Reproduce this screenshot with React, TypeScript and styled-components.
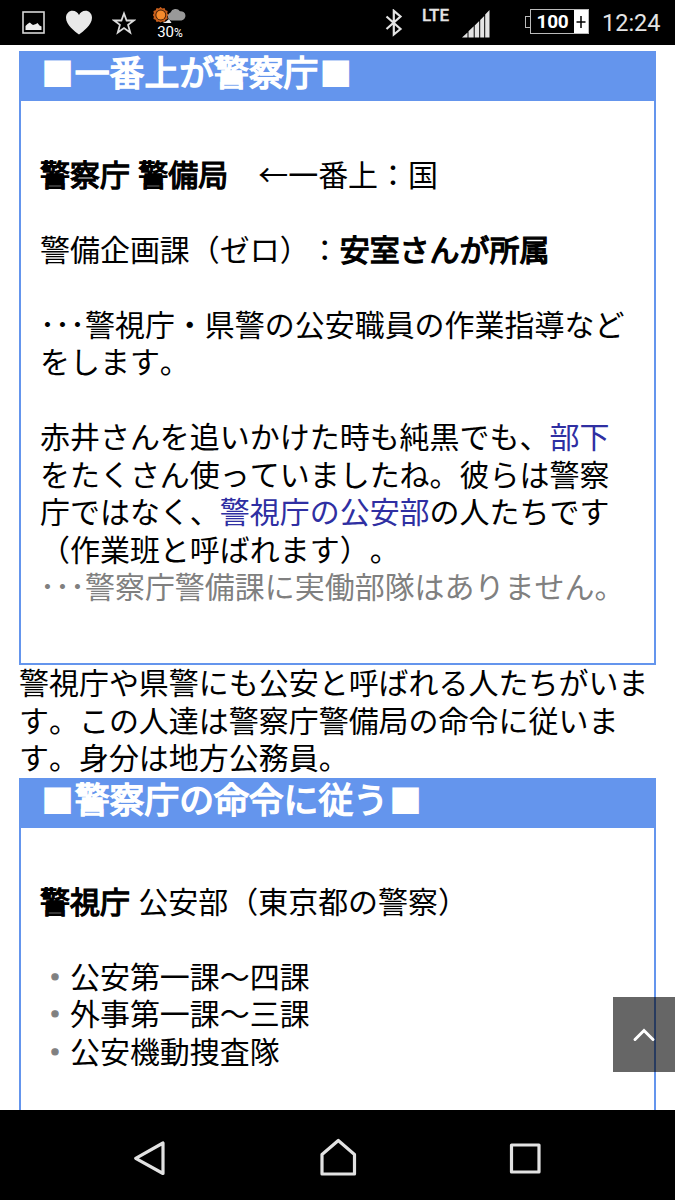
import React from "react";
import styled, { createGlobalStyle } from "styled-components";

const GlobalStyle = createGlobalStyle`
  * { box-sizing: border-box; }
  body { margin: 0; background: #000; }
`;

const Screen = styled.div`
  width: 675px;
  height: 1200px;
  display: flex;
  flex-direction: column;
  overflow: hidden;
  background: #000;
  font-family: Roboto, "Noto Sans CJK JP", sans-serif;
`;

const StatusBar = styled.header`
  height: 45px;
  flex: none;
  display: flex;
  justify-content: space-between;
  color: #e4e4e4;
`;

const StatusGroup = styled.div<{ $padding: string }>`
  display: flex;
  align-items: flex-start;
  padding: ${(p) => p.$padding};
`;

const StatusItem = styled.div<{ $left?: number; $top?: number }>`
  margin-left: ${(p) => p.$left ?? 0}px;
  margin-top: ${(p) => p.$top ?? 0}px;
  line-height: 0;
`;

const Weather = styled.div`
  width: 34px;
  margin: 7px 0 0 17px;
  display: flex;
  flex-direction: column;
  align-items: center;
`;

const Percent = styled.div`
  font-size: 15px;
  line-height: 15px;
  color: #fff;
  white-space: nowrap;
  small { font-size: 12px; }
`;

const Network = styled.div`
  margin: 5px 0 0 19px;
  width: 28px;
  font-size: 17px;
  line-height: 20px;
  font-weight: 500;
  -webkit-text-stroke: 0.3px currentColor;
`;

const Battery = styled.div`
  display: flex;
  align-items: center;
  margin: 9px 0 0 35px;
`;

const BatteryTip = styled.div`
  width: 5px;
  height: 12px;
  border: 1px solid #bbb;
  border-right: 0;
`;

const BatteryBody = styled.div`
  width: 59px;
  height: 25px;
  display: flex;
  border: 1px solid #bbb;
`;

const BatteryLevel = styled.div`
  width: 43px;
  text-align: center;
  color: #fff;
  font-size: 19px;
  line-height: 24px;
  font-weight: 700;
  letter-spacing: -0.3px;
`;

const Charging = styled.div`
  flex: 1;
  background: #fff;
  line-height: 0;
`;

const Clock = styled.div`
  margin: 9px 0 0 13px;
  width: 58px;
  font-size: 23.5px;
  line-height: 28px;
  white-space: nowrap;
`;

const Page = styled.main`
  position: relative;
  flex: 1;
  min-height: 0;
  overflow: hidden;
  padding: 6px 19px 0;
  background: #fff;
  color: #000;
  font-size: 29.97px;
  line-height: 37.5px;
  font-kerning: none;
  text-spacing-trim: space-all;
`;

const Card = styled.section`
  width: 637px;
  border: 2px solid #6495ed;
`;

const CardTitle = styled.h2`
  margin: -2px -2px 0;
  height: 50px;
  padding: 1px 0 0 21px;
  background: #6495ed;
  color: #fff;
  font-size: 34.8px;
  line-height: 44px;
  font-weight: 400;
  white-space: nowrap;
  -webkit-text-stroke: 1.6px currentColor;
`;

const Square = styled.span`
  display: inline-block;
  width: 34.8px;
  text-align: center;
  font-size: 33px;
  -webkit-text-stroke: 0;
`;

const CardBody = styled.div`
  padding: 55.9px 19px 56.6px;
`;

const Paragraph = styled.p`
  margin: 0 0 37.5px;
  &:last-child { margin-bottom: 0; }
`;

const Interlude = styled.p`
  margin: 0;
`;

const Line = styled.span<{ $muted?: boolean }>`
  display: block;
  height: 37.5px;
  white-space: pre;
  word-spacing: 1px;
  color: ${(p) => (p.$muted ? "#808080" : "inherit")};
`;

const Strong = styled.b`
  font-weight: 400;
  -webkit-text-stroke: 1.3px currentColor;
`;

const Link = styled.a`
  color: #2f2fa2;
`;

const Bullet = styled.span`
  color: #808080;
  -webkit-text-stroke: 1px currentColor;
`;

const TopButton = styled.button`
  position: absolute;
  right: 0;
  top: 952px;
  width: 62px;
  height: 75px;
  padding: 0;
  border: 0;
  background: rgba(0, 0, 0, 0.6);
  line-height: 0;
`;

const NavBar = styled.nav`
  height: 90px;
  flex: none;
  display: flex;
  justify-content: center;
  align-items: center;
  gap: 127.5px;
  padding-top: 6px;
`;

const NavIcon = styled.svg`
  width: 60px;
  height: 60px;
  fill: none;
  stroke: #e2e2e2;
  stroke-width: 3.2;
  stroke-linejoin: round;
`;

export default function App() {
  return (
    <Screen>
      <GlobalStyle />
      <StatusBar>
        <StatusGroup $padding="0 0 0 22px">
          <StatusItem $top={11}>
            <svg width="23" height="23" viewBox="0 0 23 23">
              <rect x="1" y="1" width="21" height="21" fill="none" stroke="#d6d6d6" strokeWidth="1.6" />
              <path d="M3.500 19v-4l2-2 2.300-1.500 1.700 1.500 1.500 1 3-1 1.500-1 2 2.500 2 1V19z" fill="#eee" />
            </svg>
          </StatusItem>
          <StatusItem $left={20} $top={10}>
            <svg width="28" height="26" viewBox="0 0 28 26">
              <path d="M14 24.6C10 21.5 1 15 1 7.8 1 3.500 4 .8 7.500.8c3 0 5.300 1.600 6.500 4.200C15.200 2.400 17.500.8 20.500.8 24 .8 27 3.500 27 7.800 27 15 18 21.500 14 24.600z" fill="#e8e8e8" />
            </svg>
          </StatusItem>
          <StatusItem $left={19} $top={11}>
            <svg width="24" height="24" viewBox="0 0 24 24">
              <path d="M12 2.500l2.600 7h7.200l-5.700 4.400 2.100 7.600-6.200-4.500-6.200 4.500 2.100-7.600-5.700-4.400h7.200z" fill="none" stroke="#dcdcdc" strokeWidth="1.800" />
            </svg>
          </StatusItem>
          <Weather>
            <svg width="34" height="18" viewBox="0 0 34 18">
              <path d="M9 1.500l1.800 1.600 2.400-.5 1 2.300 2.300 1-.5 2.400L17.500 10 16 11.700l.5 2.400-2.300 1-1 2.200-2.400-.5L9 18l-1.800-1.200-2.400.5-1-2.200-2.300-1 .5-2.400L.5 10 2 8.300l-.5-2.400 2.300-1 1-2.300 2.400.5z" fill="#c85f1c" transform="translate(-1 -1.500) scale(.95)" />
              <circle cx="7.800" cy="8" r="5.400" fill="#3c1c08" />
              <circle cx="7.800" cy="8" r="4.500" fill="#f58a2c" />
              <path d="M9.500 16h9l-2.500-4-3 2.500z" fill="#eee" />
              <path d="M18.300 13.500a4.200 4.200 0 0 1-.8-8A5.500 5.500 0 0 1 27 4.200a4.700 4.700 0 0 1 1.500 9.300z" fill="#999" />
            </svg>
            <Percent>30<small>%</small></Percent>
          </Weather>
        </StatusGroup>
        <StatusGroup $padding="0 15px 0 0">
          <StatusItem $top={9}>
            <svg width="18" height="28" viewBox="0 0 18 28">
              <path d="M1.500 7.500L15.500 20 8.800 25.500V1.800L15.500 7.500 1.500 20" fill="none" stroke="#e4e4e4" strokeWidth="2.200" />
            </svg>
          </StatusItem>
          <Network>LTE</Network>
          <StatusItem $left={12} $top={10}>
            <svg width="28" height="28" viewBox="0 0 28 28" fill="#e4e4e4">
              <path d="M0 27.500L5.500 22.500v5zM6.500 21.300l5.200-5v11.200H6.500zM12.700 15.500L17.200 11v16.500h-4.500zM18.200 10l4-3.900v21.400h-4zM23.200 4.500L27.500 0v27.500h-4.300z" />
            </svg>
          </StatusItem>
          <Battery>
            <BatteryTip />
            <BatteryBody>
              <BatteryLevel>100</BatteryLevel>
              <Charging>
                <svg width="14" height="23" viewBox="0 0 14 23">
                  <path d="M2.500 12h9M7 6v12" stroke="#000" strokeWidth="1.500" />
                </svg>
              </Charging>
            </BatteryBody>
          </Battery>
          <Clock>12:24</Clock>
        </StatusGroup>
      </StatusBar>

      <Page>
        <Card>
          <CardTitle><Square>■</Square>一番上が警察庁<Square>■</Square></CardTitle>
          <CardBody>
            <Paragraph>
              <Line><Strong>警察庁 警備局</Strong>　←一番上：国</Line>
            </Paragraph>
            <Paragraph>
              <Line>警備企画課（ゼロ）：<Strong>安室さんが所属</Strong></Line>
            </Paragraph>
            <Paragraph>
              <Line>･･･警視庁・県警の公安職員の作業指導など</Line>
              <Line>をします。</Line>
            </Paragraph>
            <Paragraph>
              <Line>赤井さんを追いかけた時も純黒でも、<Link>部下</Link></Line>
              <Line>をたくさん使っていましたね。彼らは警察</Line>
              <Line>庁ではなく、<Link>警視庁の公安部</Link>の人たちです</Line>
              <Line>（作業班と呼ばれます）。</Line>
              <Line $muted>･･･警察庁警備課に実働部隊はありません。</Line>
            </Paragraph>
          </CardBody>
        </Card>
        <Interlude>
          <Line>警視庁や県警にも公安と呼ばれる人たちがいま</Line>
          <Line>す。この人達は警察庁警備局の命令に従いま</Line>
          <Line>す。身分は地方公務員。</Line>
        </Interlude>
        <Card>
          <CardTitle><Square>■</Square>警察庁の命令に従う<Square>■</Square></CardTitle>
          <CardBody>
            <Paragraph>
              <Line><Strong>警視庁</Strong> 公安部（東京都の警察）</Line>
            </Paragraph>
            <Paragraph>
              <Line><Bullet>・</Bullet>公安第一課～四課</Line>
              <Line><Bullet>・</Bullet>外事第一課～三課</Line>
              <Line><Bullet>・</Bullet>公安機動捜査隊</Line>
            </Paragraph>
          </CardBody>
        </Card>
        <TopButton aria-label="Top">
          <svg width="62" height="75" viewBox="0 0 62 75">
            <path d="M22 42.500L31 33.500 40 42.500" fill="none" stroke="#fff" strokeWidth="3" strokeLinecap="round" />
          </svg>
        </TopButton>
      </Page>

      <NavBar>
        <NavIcon viewBox="0 0 60 60">
          <path d="M15.700 30.300L43 15v30.500z" />
        </NavIcon>
        <NavIcon viewBox="0 0 60 60">
          <path d="M14 46V26.500L30.300 12.500 46.500 26.500V46z" />
        </NavIcon>
        <NavIcon viewBox="0 0 60 60">
          <path d="M16.500 17h27.500v27H16.500z" />
        </NavIcon>
      </NavBar>
    </Screen>
  );
}
